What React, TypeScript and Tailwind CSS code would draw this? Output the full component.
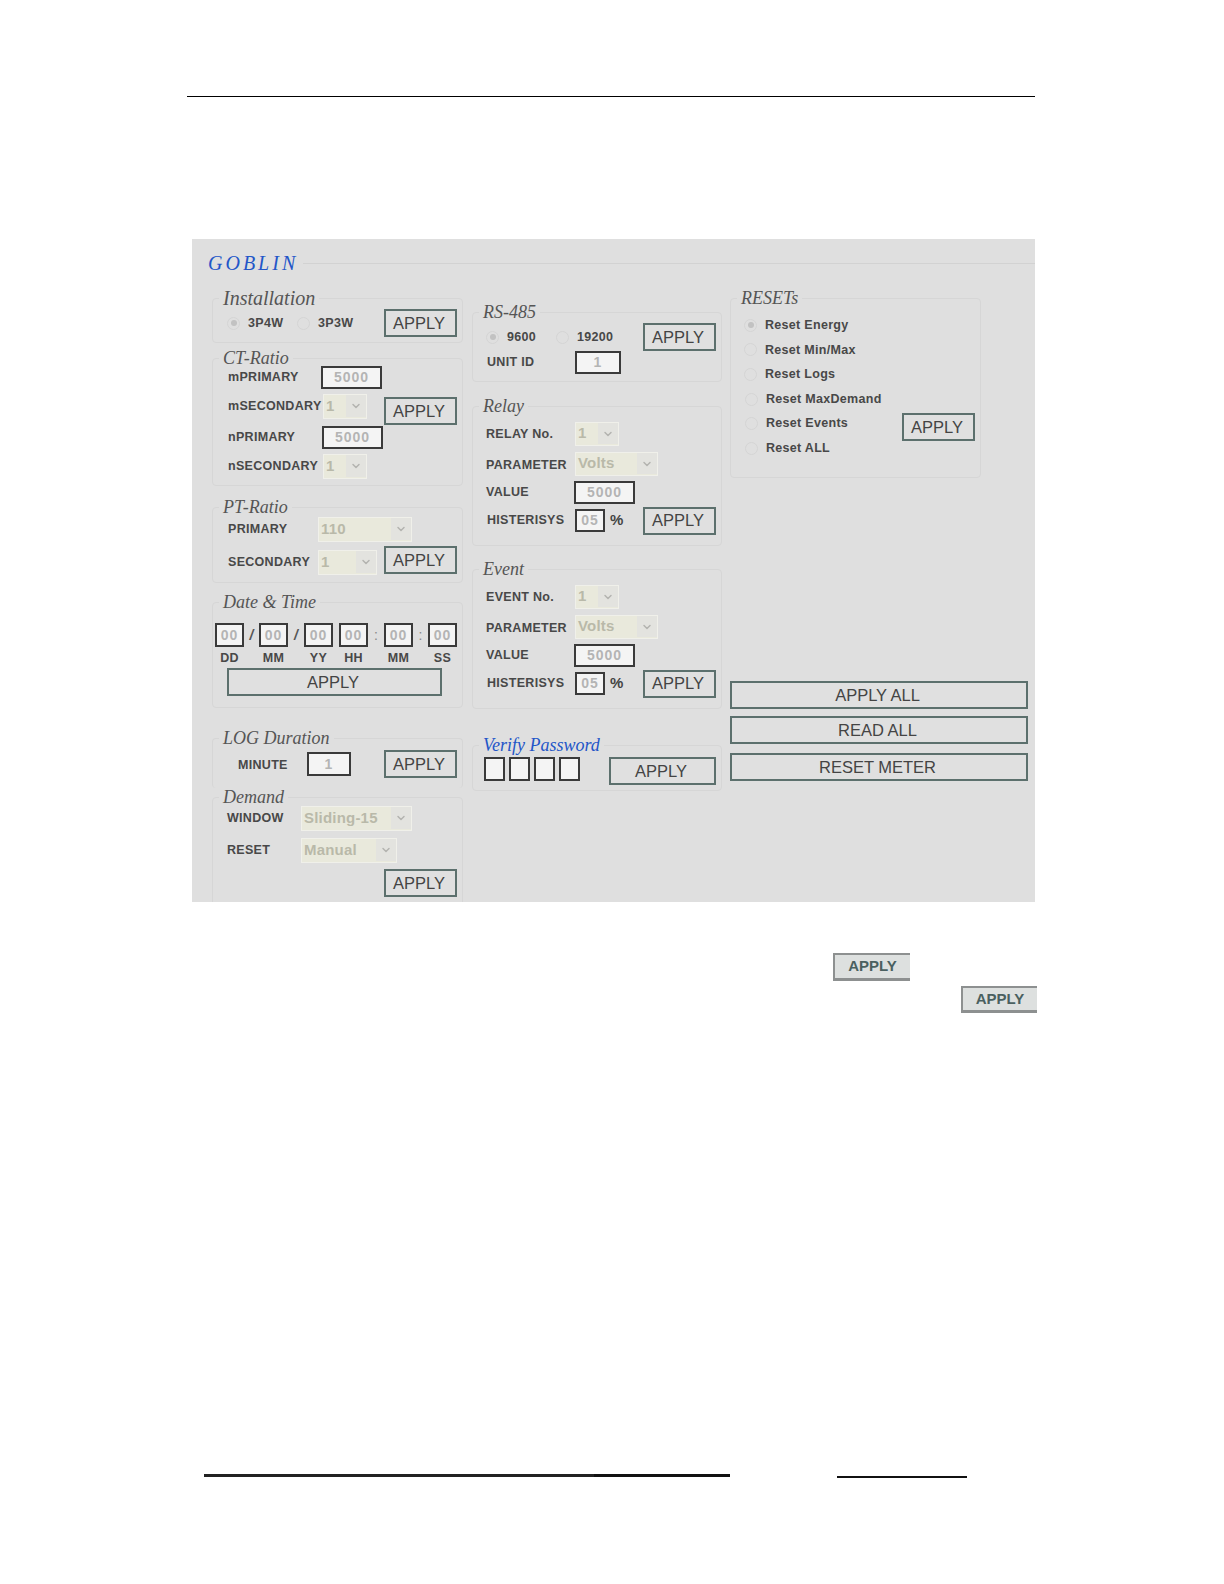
import type { ReactNode } from 'react'
import { ChevronDown } from 'lucide-react'

const sans = { fontFamily: '"Liberation Sans", Arial, sans-serif' }

function Group({ legend, className, blue, wide, children }: { legend: string; className: string; blue?: boolean; wide?: boolean; children: ReactNode }) {
  return (
    <div className={`relative rounded-[4px] border border-[#d6d6d6] ${className}`}>
      <span
        className={`absolute left-[6px] top-[-12px] bg-[#dfdfdf] px-1 font-['Liberation_Serif',serif] italic leading-[22px] whitespace-nowrap ${
          wide ? 'text-[20px]' : 'text-[18px]'
        } ${blue ? 'text-[#2356c8]' : 'text-[#555]'}`}
      >
        {legend}
      </span>
      {children}
    </div>
  )
}

function Apply({ className = 'w-[73px] h-[28px]', label = 'APPLY' }: { className?: string; label?: string }) {
  return (
    <button className={`shrink-0 border-2 border-[#5c706d] bg-[#e0e0e0] pr-[3px] text-[16.5px] leading-none text-[#444] ${className}`}>
      {label}
    </button>
  )
}

function Label({ className, children }: { className: string; children: ReactNode }) {
  return <span className={`shrink-0 text-[12.5px] font-bold tracking-[0.3px] text-[#484848] whitespace-nowrap ${className}`}>{children}</span>
}

function Input({ className, value }: { className: string; value?: string }) {
  return (
    <div className={`flex shrink-0 items-center justify-center border-2 border-[#3a3a3a] bg-[#f4f4f4] text-[14px] font-bold tracking-[1px] text-[#b4b4b4] ${className}`}>
      {value}
    </div>
  )
}

function Select({ className, value }: { className: string; value: string }) {
  return (
    <div className={`flex shrink-0 items-center border border-[#f0f0ea] bg-[#e9e9dc] pb-px pl-[2px] text-[15px] font-bold tracking-[0.2px] text-[#b9b9a9] ${className}`}>
      <span className="flex-1 whitespace-nowrap">{value}</span>
      <span className="flex h-full w-[20px] items-center justify-center bg-[#e3e3df]">
        <ChevronDown size={12} strokeWidth={3} color="#b4b4b0" />
      </span>
    </div>
  )
}

function Radio({ checked }: { checked?: boolean }) {
  return (
    <span className="flex h-[13px] w-[13px] shrink-0 items-center justify-center rounded-full border border-[#d5d5d5]">
      {checked && <span className="h-[6px] w-[6px] rounded-full bg-[#c2c2c2]" />}
    </span>
  )
}

function Option({ className, label, checked }: { className: string; label: string; checked?: boolean }) {
  return (
    <div className={`flex shrink-0 items-center gap-2 ${className}`}>
      <Radio checked={checked} />
      <Label className="">{label}</Label>
    </div>
  )
}

function Channel({ legend, no, className }: { legend: string; no: string; className: string }) {
  return (
    <Group legend={legend} className={`h-[140px] pl-[13px] pt-[15px] ${className}`}>
      <div className="flex h-[24px] items-center">
        <Label className="w-[89px]">{no}</Label>
        <Select className="h-[24px] w-[44px]" value="1" />
      </div>
      <div className="mt-[6px] flex h-[24px] items-center">
        <Label className="w-[89px] pt-[3px]">PARAMETER</Label>
        <Select className="h-[24px] w-[83px]" value="Volts" />
      </div>
      <div className="mt-[5px] flex h-[23px] items-center">
        <Label className="w-[88px]">VALUE</Label>
        <Input className="h-[23px] w-[61px]" value="5000" />
      </div>
      <div className="mt-[5px] flex h-[23px] items-center">
        <Label className="ml-px w-[88px]">HISTERISYS</Label>
        <Input className="h-[23px] w-[30px]" value="05" />
        <span className="ml-[5px] w-[13px] text-[15px] font-bold text-[#444]">%</span>
        <Apply className="ml-[20px] h-[28px] w-[73px]" />
      </div>
    </Group>
  )
}

function DateCell({ label }: { label: string }) {
  return (
    <div className="flex w-[29px] shrink-0 flex-col items-center">
      <Input className="h-[24px] w-[29px]" value="00" />
      <Label className="mt-[2px] leading-[18px]">{label}</Label>
    </div>
  )
}

function Sep({ className, char }: { className: string; char: string }) {
  return <span className={`h-[24px] shrink-0 text-center text-[14px] leading-[24px] ${className}`}>{char}</span>
}

export default function App() {
  return (
    <div className="flex h-[1584px] w-[1224px] flex-col overflow-hidden bg-white" style={sans}>
      <div className="ml-[187px] mt-[96px] h-px w-[848px] shrink-0 bg-black" />

      <div className="ml-[192px] mt-[142px] h-[663px] w-[843px] shrink-0 overflow-hidden bg-[#dfdfdf]">
        <div className="ml-[16px] mt-[14px] flex h-[20px] items-center gap-[5px]">
          <span className="font-['Liberation_Serif',serif] text-[20px] italic leading-none tracking-[3px] text-[#2356c8]">GOBLIN</span>
          <div className="h-px flex-1 bg-[#d2d2d2]" />
        </div>

        <div className="ml-[20px] mt-[25px] flex">
          {/* left column */}
          <div className="flex w-[251px] shrink-0 flex-col">
            <Group legend="Installation" wide className="flex h-[45px] pl-[14px] pt-[10px]">
              <div className="flex h-[28px] items-center">
                <Option className="w-[70px]" label="3P4W" checked />
                <Option className="w-[87px]" label="3P3W" />
                <Apply />
              </div>
            </Group>

            <Group legend="CT-Ratio" className="mt-[15px] flex h-[128px] pl-[15px] pt-[7px]">
              <div className="w-[156px] shrink-0">
                <div className="flex h-[23px] items-center">
                  <Label className="w-[93px]">mPRIMARY</Label>
                  <Input className="h-[23px] w-[61px]" value="5000" />
                </div>
                <div className="mt-[5px] flex h-[25px] items-center">
                  <Label className="w-[95px]">mSECONDARY</Label>
                  <Select className="h-[25px] w-[44px]" value="1" />
                </div>
                <div className="mt-[7px] flex h-[23px] items-center">
                  <Label className="w-[94px]">nPRIMARY</Label>
                  <Input className="h-[23px] w-[61px]" value="5000" />
                </div>
                <div className="mt-[5px] flex h-[25px] items-center">
                  <Label className="w-[95px]">nSECONDARY</Label>
                  <Select className="h-[25px] w-[44px]" value="1" />
                </div>
              </div>
              <Apply className="mt-[31px] h-[28px] w-[73px]" />
            </Group>

            <Group legend="PT-Ratio" className="mt-[21px] h-[76px] pl-[15px] pt-[9px]">
              <div className="flex h-[25px] items-center">
                <Label className="w-[90px]">PRIMARY</Label>
                <Select className="h-[25px] w-[94px]" value="110" />
              </div>
              <div className="mt-[8px] flex h-[25px] items-center">
                <Label className="w-[90px]">SECONDARY</Label>
                <Select className="h-[25px] w-[59px]" value="1" />
                <Apply className="ml-[7px] -mt-[4px] h-[28px] w-[73px] self-start" />
              </div>
            </Group>

            <Group legend="Date & Time" className="mt-[19px] h-[106px] pl-[2px] pt-[20px]">
              <div className="flex items-start">
                <DateCell label="DD" />
                <Sep className="w-[15px] font-bold italic text-[#555]" char="/" />
                <DateCell label="MM" />
                <Sep className="w-[16px] font-bold italic text-[#555]" char="/" />
                <DateCell label="YY" />
                <div className="w-[6px] shrink-0" />
                <DateCell label="HH" />
                <Sep className="w-[16px] text-[#888]" char=":" />
                <DateCell label="MM" />
                <Sep className="w-[15px] text-[#888]" char=":" />
                <DateCell label="SS" />
              </div>
              <Apply className="ml-[12px] mt-px h-[28px] w-[215px]" />
            </Group>

            <Group legend="LOG Duration" className="mt-[30px] h-[50px] border-b-0 pl-[25px] pt-[11px]">
              <div className="flex h-[28px] items-center">
                <Label className="w-[69px] pt-[3px]">MINUTE</Label>
                <Input className="h-[24px] w-[44px]" value="1" />
                <Apply className="ml-[33px] h-[28px] w-[73px]" />
              </div>
            </Group>

            <Group legend="Demand" className="mt-[9px] h-[130px] pl-[14px] pt-[8px]">
              <div className="flex h-[25px] items-center">
                <Label className="w-[74px]">WINDOW</Label>
                <Select className="h-[25px] w-[111px]" value="Sliding-15" />
              </div>
              <div className="mt-[7px] flex h-[25px] items-center">
                <Label className="w-[74px]">RESET</Label>
                <Select className="h-[25px] w-[96px]" value="Manual" />
              </div>
              <Apply className="ml-[157px] mt-[6px] h-[28px] w-[73px]" />
            </Group>
          </div>

          {/* middle column */}
          <div className="ml-[9px] flex w-[250px] shrink-0 flex-col">
            <Group legend="RS-485" className="mt-[14px] h-[70px] pl-[13px] pt-[10px]">
              <div className="flex h-[28px] items-center">
                <Option className="w-[70px]" label="9600" checked />
                <Option className="w-[87px]" label="19200" />
                <Apply className="h-[28px] w-[73px]" />
              </div>
              <div className="flex h-[23px] items-center">
                <Label className="ml-px w-[88px]">UNIT ID</Label>
                <Input className="h-[23px] w-[46px]" value="1" />
              </div>
            </Group>

            <Channel legend="Relay" no="RELAY No." className="mt-[24px]" />
            <Channel legend="Event" no="EVENT No." className="mt-[23px]" />

            <Group legend="Verify Password" blue className="mt-[36px] flex h-[46px] pl-[11px] pt-[11px]">
              <div className="flex h-[24px] gap-[4px]">
                <Input className="h-[24px] w-[21px]" />
                <Input className="h-[24px] w-[21px]" />
                <Input className="h-[24px] w-[21px]" />
                <Input className="h-[24px] w-[21px]" />
              </div>
              <Apply className="ml-[29px] h-[28px] w-[107px]" />
            </Group>
          </div>

          {/* right column */}
          <div className="ml-[8px] flex w-[298px] shrink-0 flex-col">
            <Group legend="RESETs" className="flex h-[180px] w-[251px] pl-[13px] pt-[14px]">
              <div className="w-[158px] shrink-0">
                {['Reset Energy', 'Reset Min/Max', 'Reset Logs'].map((label, i) => (
                  <div key={label} className="flex h-[24.6px] items-center">
                    <Option className="" label={label} checked={i === 0} />
                  </div>
                ))}
                {['Reset MaxDemand', 'Reset Events', 'Reset ALL'].map((label) => (
                  <div key={label} className="ml-px flex h-[24.6px] items-center">
                    <Option className="" label={label} />
                  </div>
                ))}
              </div>
              <Apply className="mt-[100px] h-[28px] w-[73px]" />
            </Group>

            <Apply className="mt-[203px] h-[28px] w-[298px]" label="APPLY ALL" />
            <Apply className="mt-[7px] h-[28px] w-[298px]" label="READ ALL" />
            <Apply className="mt-[9px] h-[28px] w-[298px]" label="RESET METER" />
          </div>
        </div>
      </div>

      <button className="ml-[833px] mt-[51px] h-[28px] w-[77px] shrink-0 border-b-[3px] border-l-2 border-t-2 border-[#8d9090] bg-[#dde0df] text-[15px] font-bold text-[#4a6060]">
        APPLY
      </button>
      <button className="ml-[961px] mt-[5px] h-[27px] w-[76px] shrink-0 border-b-[3px] border-l-2 border-t-2 border-[#8d9090] bg-[#dde0df] text-[15px] font-bold text-[#4a6060]">
        APPLY
      </button>

      <div className="ml-[204px] mt-[461px] flex items-start">
        <div className="h-[3px] w-[390px] bg-[#222]" />
        <div className="h-[3px] w-[136px] bg-[#111]" />
        <div className="ml-[107px] mt-[2px] h-[2px] w-[130px] bg-[#111]" />
      </div>
    </div>
  )
}
